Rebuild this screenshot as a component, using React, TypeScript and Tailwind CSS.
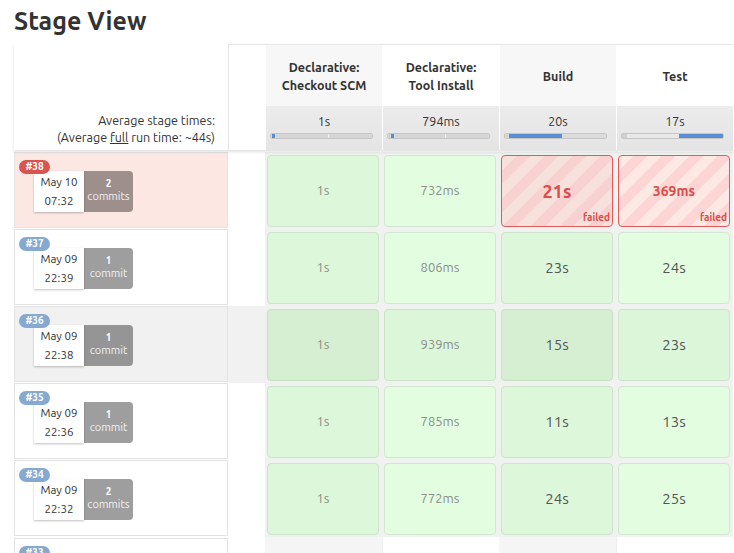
import React from 'react';

type Run = {
  id: number;
  date: string;
  time: string;
  commits: number;
  failed?: boolean;
  hover?: boolean;
  cells: string[];
};

const runs: Run[] = [
  { id: 38, date: 'May 10', time: '07:32', commits: 2, failed: true, cells: ['1s', '732ms', '21s', '369ms'] },
  { id: 37, date: 'May 09', time: '22:39', commits: 1, cells: ['1s', '806ms', '23s', '24s'] },
  { id: 36, date: 'May 09', time: '22:38', commits: 1, hover: true, cells: ['1s', '939ms', '15s', '23s'] },
  { id: 35, date: 'May 09', time: '22:36', commits: 1, cells: ['1s', '785ms', '11s', '13s'] },
  { id: 34, date: 'May 09', time: '22:32', commits: 2, cells: ['1s', '772ms', '24s', '25s'] },
];

const stages = [
  {
    name: ['Declarative:', 'Checkout SCM'],
    avg: '1s',
    head: 'bg-[#f7f7f7]',
    bar: [
      'w-[1px] bg-[#d6d6d6]',
      'w-[3px] bg-[#5b8dd0]',
      'w-[53px] bg-[#d6d6d6]',
      'w-[1px] bg-[#f0f0f0]',
      'flex-1 bg-[#d6d6d6]',
    ],
  },
  {
    name: ['Declarative:', 'Tool Install'],
    avg: '794ms',
    head: 'bg-white',
    bar: [
      'w-[3px] bg-[#d6d6d6]',
      'w-[3px] bg-[#5b8dd0]',
      'w-[51px] bg-[#d6d6d6]',
      'w-[1px] bg-[#f0f0f0]',
      'flex-1 bg-[#d6d6d6]',
    ],
  },
  {
    name: ['Build'],
    avg: '20s',
    head: 'bg-[#f7f7f7]',
    bar: ['w-[4px] bg-[#d6d6d6]', 'w-[53px] bg-[#5b8dd0]', 'flex-1 bg-[#dcdcdc]'],
  },
  {
    name: ['Test'],
    avg: '17s',
    head: 'bg-white',
    bar: ['w-[5px] bg-[#cfcfcf]', 'w-[52px] bg-[#e8e8e8]', 'flex-1 bg-[#5b8dd0]'],
  },
];

function RunInfo({ run, id }: { run?: Run; id: number }) {
  const bg = run?.failed ? 'bg-[#fde7e3]' : run?.hover ? 'bg-[#f1f1f1]' : 'bg-white';
  const badge = run?.failed ? 'bg-[#d9534f]' : 'bg-[#86a9d2]';
  return (
    <div className={`w-[214px] h-[76px] border border-[#e4e4e4] pt-[7px] pl-[4px] ${bg}`}>
      <div className={`relative z-10 w-[31px] h-[14px] rounded-full ${badge} text-white text-[10px] font-bold leading-[14px] text-center`}>
        #{id}
      </div>
      {run && (
        <div className="flex ml-[15px] -mt-[3px] h-[41px]">
          <div className="w-[50px] bg-white shadow-[0_1px_2px_rgba(0,0,0,0.25)] flex flex-col items-center justify-center pb-[2px] text-[11.5px] leading-[19px] text-[#333]">
            <span>{run.date}</span>
            <span>{run.time}</span>
          </div>
          <div className="w-[49px] rounded-r-[4px] bg-black/[0.38] flex flex-col items-center justify-center pb-[4px] text-white">
            <span className="text-[10px] font-bold leading-[13px]">{run.commits}</span>
            <span className="text-[11px] leading-[13px] text-[#f2f2f2]">{run.commits === 1 ? 'commit' : 'commits'}</span>
          </div>
        </div>
      )}
    </div>
  );
}

function StageCell({ value, col, run }: { value: string; col: number; run: Run }) {
  const odd = col % 2 === 0;
  const failed = run.failed && col >= 2;
  const big = col >= 2;
  let box = '';
  if (failed) {
    box = odd
      ? 'border-[#e25b5b] bg-[repeating-linear-gradient(135deg,#f6e1dc_0px,#f6e1dc_10px,#f8d1d1_10px,#f8d1d1_20px)]'
      : 'border-[#e25b5b] bg-[repeating-linear-gradient(135deg,#fee8e4_0px,#fee8e4_10px,#fdd5d5_10px,#fdd5d5_20px)]';
  } else if (run.hover) {
    box = odd ? 'border-[#c9dfc6] bg-[#d6efd3]' : 'border-[#cfe3cc] bg-[#dcf6d9]';
  } else {
    box = odd ? 'border-[#cfe2cc] bg-[#ddf7da]' : 'border-[#d3e6d1] bg-[#e3fde1]';
  }
  const text = failed
    ? col === 2
      ? 'text-[18px] font-bold text-[#dc4d48]'
      : 'text-[14px] font-bold text-[#dc4d48]'
    : big
      ? 'text-[15px] text-[#555]'
      : 'text-[13px] text-[#8a8f88]';
  return (
    <div className="w-[117px] h-[77px] pt-[3px] pl-[2px] pr-[3px] bg-[#eff2ef]">
      <div className={`relative h-[72px] rounded-[4px] border flex items-center justify-center ${box}`}>
        <span className={text}>{value}</span>
        {failed && (
          <span className="absolute right-[2px] bottom-[2px] text-[10px] font-bold leading-[12px] text-[#dc4d48]">failed</span>
        )}
      </div>
    </div>
  );
}

export default function App() {
  return (
    <div className="w-[734px] h-[553px] overflow-hidden bg-white pl-[14px] font-['Ubuntu','Open_Sans',sans-serif] text-[#333]">
      <h2 className="h-[44px] pt-[4px] text-[25px] leading-[34px] font-bold text-[#333]">Stage View</h2>

      {/* header */}
      <div className="flex h-[106px] shadow-[0_2px_3px_rgba(0,0,0,0.12)] relative z-10">
        <div className="w-[214px] flex flex-col justify-end items-end pr-[13px] pb-[4px] text-[12.5px] leading-[17px] bg-white">
          <span>Average stage times:</span>
          <span>
            (Average <span className="underline">full</span> run time: ~44s)
          </span>
        </div>
        <div className="w-[37px] border-l border-t border-[#e6e6e6] bg-white" />
        {stages.map((s, i) => (
          <div key={i} className="w-[117px] flex flex-col border-t border-[#e6e6e6]">
            <div className={`h-[61px] flex flex-col items-center justify-center border-l border-white ${s.head} text-[12.5px] font-bold leading-[18px] text-[#333]`}>
              {s.name.map((n) => (
                <span key={n}>{n}</span>
              ))}
            </div>
            <div className="h-[44px] border-l border-white bg-[linear-gradient(#ececec,#e4e4e4)] pt-[7px]">
              <div className="text-center text-[12.5px] leading-[16px] text-[#333]">{s.avg}</div>
              <div className="mt-[4px] ml-[4px] w-[103px] h-[6px] rounded-[2px] border border-[#c6c6c6] overflow-hidden flex">
                {s.bar.map((b, j) => (
                  <div key={j} className={`h-full ${b}`} />
                ))}
              </div>
            </div>
          </div>
        ))}
      </div>

      <div className="h-[2px]" />

      {/* runs */}
      {runs.map((run) => (
        <div key={run.id} className="flex h-[77px]">
          <RunInfo run={run} id={run.id} />
          <div className={`w-[37px] ${run.hover ? 'bg-[#f1f1f1]' : 'bg-white'}`} />
          {run.cells.map((c, i) => (
            <StageCell key={i} value={c} col={i} run={run} />
          ))}
        </div>
      ))}

      <div className="flex h-[77px]">
        <div className="pt-[1px]">
          <RunInfo id={33} />
        </div>
        <div className="w-[37px] bg-white" />
        <div className="w-[117px] bg-[#f5f5f5]" />
        <div className="w-[117px] bg-white border-l border-[#eeeeee]" />
        <div className="w-[117px] bg-[#f5f5f5]" />
        <div className="w-[117px] bg-white border-l border-[#eeeeee]" />
      </div>
    </div>
  );
}
